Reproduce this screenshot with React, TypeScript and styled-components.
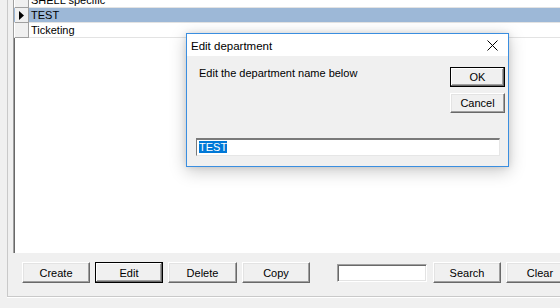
import React from 'react';
import styled, { createGlobalStyle, css } from 'styled-components';

const GlobalStyle = createGlobalStyle`
  html, body {
    margin: 0;
    padding: 0;
    background: #f0f0f0;
  }
  body {
    font-family: "Liberation Sans", Arial, sans-serif;
    font-size: 11px;
    color: #000;
  }
`;

const Window = styled.div`
  position: relative;
  width: 560px;
  height: 308px;
  overflow: hidden;
  background: #f0f0f0;
`;

const Panel = styled.div`
  margin-left: 7px;
  height: 297px;
  box-sizing: border-box;
  border-left: 1px solid #c9c9c9;
  border-bottom: 1px solid #c9c9c9;
  box-shadow: 0 1px 0 #ffffff;
  display: flex;
  flex-direction: column;
`;

const GridFrame = styled.div`
  margin-left: 5px;
  height: 253px;
  flex: none;
  background: #ffffff;
  border-left: 1px solid #a0a0a0;
  box-shadow: inset 1px 0 0 #696969;
  overflow: hidden;
`;

const RowList = styled.div`
  margin-top: -7px;
`;

const Row = styled.div<{ $selected?: boolean }>`
  display: flex;
  height: 15px;
  box-sizing: border-box;
  border-bottom: 1px solid #e3e3e3;
  background: ${(p) => (p.$selected ? '#9db8d7' : '#ffffff')};
`;

const RowHeader = styled.div`
  width: 14px;
  margin-left: 1px;
  flex: none;
  background: #f0f0f0;
  border-right: 1px solid #a0a0a0;
  border-bottom: 1px solid #a0a0a0;
  margin-bottom: -1px;
  box-sizing: border-box;
  display: flex;
  align-items: center;
  justify-content: center;
`;

const Cell = styled.div`
  padding-left: 2px;
  line-height: 15px;
  white-space: nowrap;
`;

const ButtonBar = styled.div`
  display: flex;
  align-items: center;
  margin: 9px 0 0 14px;
  gap: 5px;
`;

const buttonBase = css`
  height: 21px;
  box-sizing: border-box;
  padding: 0;
  font-family: "Liberation Sans", Arial, sans-serif;
  font-size: 11px;
  color: #000;
  background: #f0f0f0;
  border-top: 1px solid #ffffff;
  border-left: 1px solid #ffffff;
  border-right: 1px solid #696969;
  border-bottom: 1px solid #696969;
  box-shadow: inset -1px -1px 0 #a0a0a0, inset 1px 1px 0 #e3e3e3;
  flex: none;
`;

const Button = styled.button<{ $default?: boolean; $width?: number; $height?: number }>`
  ${buttonBase};
  width: ${(p) => p.$width ?? 68}px;
  height: ${(p) => p.$height ?? 21}px;
  ${(p) =>
    p.$default &&
    css`
      border: 1px solid #000;
      box-shadow: inset -1px -1px 0 #696969, inset 1px 1px 0 #ffffff,
        inset -2px -2px 0 #a0a0a0;
    `}
`;

const SearchBox = styled.div`
  flex: none;
  width: 90px;
  height: 18px;
  box-sizing: border-box;
  margin: 0 1px 0 22px;
  background: #fff;
  border-top: 1px solid #a0a0a0;
  border-left: 1px solid #a0a0a0;
  border-right: 1px solid #ffffff;
  border-bottom: 1px solid #ffffff;
  box-shadow: inset 1px 1px 0 #696969, inset -1px -1px 0 #e3e3e3;
`;

const Dialog = styled.div`
  position: absolute;
  left: 186px;
  top: 33px;
  width: 323px;
  height: 134px;
  box-sizing: border-box;
  border: 1px solid #3a8ee0;
  background: #f0f0f0;
  box-shadow: 0 4px 16px rgba(0, 0, 0, 0.22), 0 0 6px rgba(0, 0, 0, 0.1);
  display: flex;
  flex-direction: column;
`;

const TitleBar = styled.div`
  height: 22px;
  background: #ffffff;
  display: flex;
  align-items: center;
  justify-content: space-between;
  padding: 0 10px 0 4px;
`;

const Title = styled.div`
  font-family: "Liberation Sans", Arial, sans-serif;
  font-size: 11.5px;
  padding-top: 1px;
`;

const DialogBody = styled.div`
  flex: 1;
  display: flex;
  flex-direction: column;
  padding: 10px 3px 0 9px;
`;

const TopRow = styled.div`
  display: flex;
  justify-content: space-between;
  align-items: flex-start;
`;

const Prompt = styled.div`
  margin: 1px 0 0 3px;
`;

const ButtonColumn = styled.div`
  display: flex;
  flex-direction: column;
  gap: 6px;
  padding-top: 1px;
`;

const NameBox = styled.div`
  margin: 25px 5px 0 0;
  height: 18px;
  box-sizing: border-box;
  background: #fff;
  border-top: 2px solid #7a7a7a;
  border-left: 1px solid #7a7a7a;
  border-right: 1px solid #e6e6e6;
  border-bottom: 1px solid #e6e6e6;
  padding: 1px 0 0 2px;
  line-height: 13px;
`;

const Selected = styled.span`
  background: #0078d7;
  color: #fff;
`;

const rows = [
  { name: 'SHELL specific' },
  { name: 'TEST', selected: true },
  { name: 'Ticketing' },
];

const Arrow = () => (
  <svg width="5" height="9" viewBox="0 0 5 9">
    <path d="M0 0 L5 4.5 L0 9 Z" fill="#000" />
  </svg>
);

const CloseIcon = () => (
  <svg width="11" height="11" viewBox="0 0 11 11">
    <path d="M0.5 0.5 L10.5 10.5 M10.5 0.5 L0.5 10.5" stroke="#000" strokeWidth="1" />
  </svg>
);

export default function App() {
  return (
    <Window>
      <GlobalStyle />
      <Panel>
        <GridFrame>
          <RowList>
            {rows.map((r) => (
              <Row key={r.name} $selected={r.selected}>
                <RowHeader>{r.selected && <Arrow />}</RowHeader>
                <Cell>{r.name}</Cell>
              </Row>
            ))}
          </RowList>
        </GridFrame>
        <ButtonBar>
          <Button>Create</Button>
          <Button $default>Edit</Button>
          <Button $width={69}>Delete</Button>
          <Button>Copy</Button>
          <SearchBox />
          <Button>Search</Button>
          <Button>Clear</Button>
        </ButtonBar>
      </Panel>

      <Dialog>
        <TitleBar>
          <Title>Edit department</Title>
          <CloseIcon />
        </TitleBar>
        <DialogBody>
          <TopRow>
            <Prompt>Edit the department name below</Prompt>
            <ButtonColumn>
              <Button $default $width={55} $height={20}>OK</Button>
              <Button $width={55} $height={20}>Cancel</Button>
            </ButtonColumn>
          </TopRow>
          <NameBox>
            <Selected>TEST</Selected>
          </NameBox>
        </DialogBody>
      </Dialog>
    </Window>
  );
}
